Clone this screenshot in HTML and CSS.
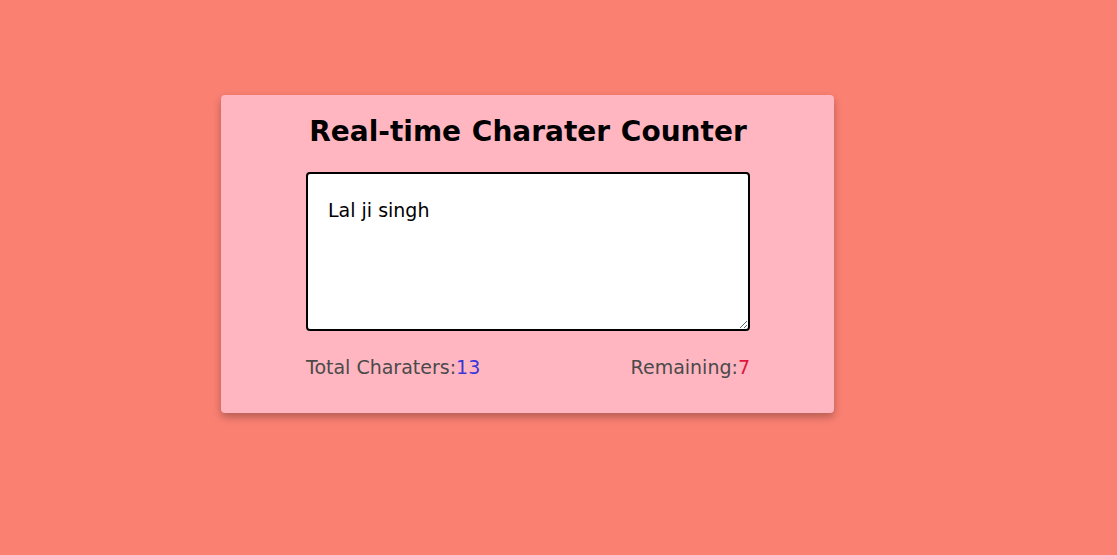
FILE: index.html
```html
<!DOCTYPE html>
<html lang="en">
<head>
<meta charset="utf-8">
<title>Real-time Charater Counter</title>
<link rel="stylesheet" href="styles.css">
</head>
<body>
  <div class="card">
    <h1 class="title">Real-time Charater Counter</h1>
    <textarea class="input" spellcheck="true">Lal ji singh </textarea>
    <div class="stats">
      <p class="stat">Total Charaters:<span class="count">13</span></p>
      <p class="stat">Remaining:<span class="remain">7</span></p>
    </div>
  </div>
</body>
</html>
```
FILE: styles.css
```css
html, body {
  margin: 0;
  padding: 0;
}
body {
  background: #fa8072;
  height: 555px;
  font-family: "DejaVu Sans", "Noto Sans", sans-serif;
}
.card {
  box-sizing: border-box;
  width: 613px;
  height: 318px;
  margin: 95px 0 0 221px;
  padding: 17px 84px 0 85px;
  background: #ffb6c1;
  border-radius: 4px;
  box-shadow: 0 4px 8px rgba(0, 0, 0, 0.28);
  display: flex;
  flex-direction: column;
}
.title {
  margin: 0;
  font-size: 28px;
  line-height: 40px;
  font-weight: bold;
  color: #000;
  text-align: center;
  white-space: nowrap;
  letter-spacing: 0;
  word-spacing: 1px;
}
.input {
  box-sizing: border-box;
  margin-top: 20px;
  width: 444px;
  height: 159px;
  padding: 22px 20px 20px;
  border: 2px solid #000;
  border-radius: 4px;
  background: #fff;
  font-family: "DejaVu Sans", "Noto Sans", sans-serif;
  font-size: 19px;
  line-height: 28px;
  color: #000;
  outline: none;
  resize: both;
}
.stats {
  margin-top: 24px;
  display: flex;
  justify-content: space-between;
}
.stat {
  margin: 0;
  font-size: 19px;
  line-height: 24px;
  color: #4a4a4a;
}
.count {
  color: #3a36d8;
}
.remain {
  color: #e0143c;
}
```
